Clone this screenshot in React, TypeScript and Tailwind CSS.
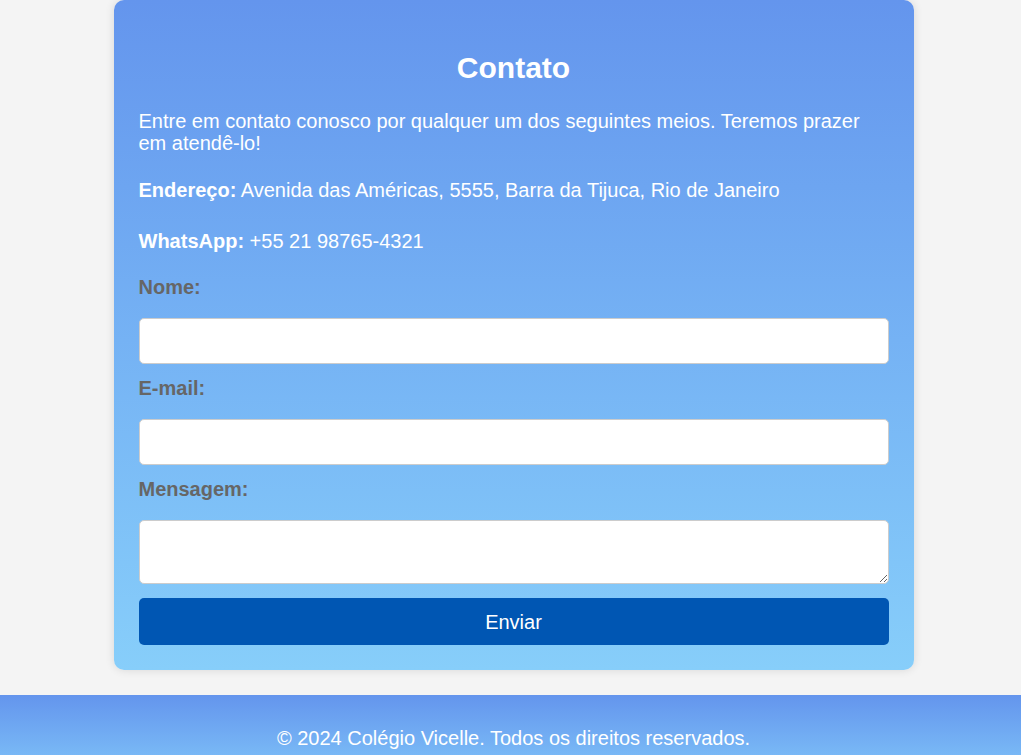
import { useState } from "react";

const font = { fontFamily: '"Liberation Sans", Arial, sans-serif' };

const Campo = ({ label, top }: { label: string; top: string }) => (
  <label className={`block ${top} text-[20px] leading-[22px] font-bold text-[#666]`}>{label}</label>
);

export default function App() {
  const [nome, setNome] = useState("");
  const [email, setEmail] = useState("");
  const [msg, setMsg] = useState("");

  return (
    <div className="min-h-screen bg-[#f4f4f4] pl-[6px] text-white" style={font}>
      <section className="mx-auto w-[800px] rounded-[10px] bg-gradient-to-b from-[#6495ed] to-[#87cefa] px-[25px] pt-[52px] pb-[25px] shadow-[0_0_10px_rgba(0,0,0,0.12)]">
        <h2 className="text-center text-[30px] leading-[32px] font-bold">Contato</h2>
        <p className="mt-[26px] text-[20px] leading-[22px]">
          Entre em contato conosco por qualquer um dos seguintes meios. Teremos prazer em atendê-lo!
        </p>
        <p className="mt-[25px] text-[20px] leading-[22px]">
          <strong>Endereço:</strong> Avenida das Américas, 5555, Barra da Tijuca, Rio de Janeiro
        </p>
        <p className="mt-[29px] text-[20px] leading-[22px]">
          <strong>WhatsApp:</strong> +55 21 98765-4321
        </p>
        <form onSubmit={(e) => e.preventDefault()}>
          <Campo label="Nome:" top="mt-[24px]" />
          <input
            value={nome}
            onChange={(e) => setNome(e.target.value)}
            className="mt-[20px] block h-[46px] w-full rounded-[5px] border border-[#ccc] bg-white px-3 text-[18px] text-black outline-none"
          />
          <Campo label="E-mail:" top="mt-[13px]" />
          <input
            type="email"
            value={email}
            onChange={(e) => setEmail(e.target.value)}
            className="mt-[20px] block h-[46px] w-full rounded-[5px] border border-[#ccc] bg-white px-3 text-[18px] text-black outline-none"
          />
          <Campo label="Mensagem:" top="mt-[13px]" />
          <textarea
            value={msg}
            onChange={(e) => setMsg(e.target.value)}
            className="mt-[20px] block h-[64px] w-full rounded-[5px] border border-[#ccc] bg-white px-3 py-2 text-[18px] text-black outline-none"
          />
          <button
            type="submit"
            className="mt-[14px] block h-[47px] w-full rounded-[5px] bg-[#0056b3] text-[20px] text-white"
          >
            Enviar
          </button>
        </form>
      </section>
      <footer className="-ml-[6px] mt-[25px] h-[98px] bg-gradient-to-b from-[#6495ed] to-[#87cefa] pt-[32px] pl-[6px] text-center">
        <p className="text-[20px] leading-[22px]">© 2024 Colégio Vicelle. Todos os direitos reservados.</p>
      </footer>
    </div>
  );
}
